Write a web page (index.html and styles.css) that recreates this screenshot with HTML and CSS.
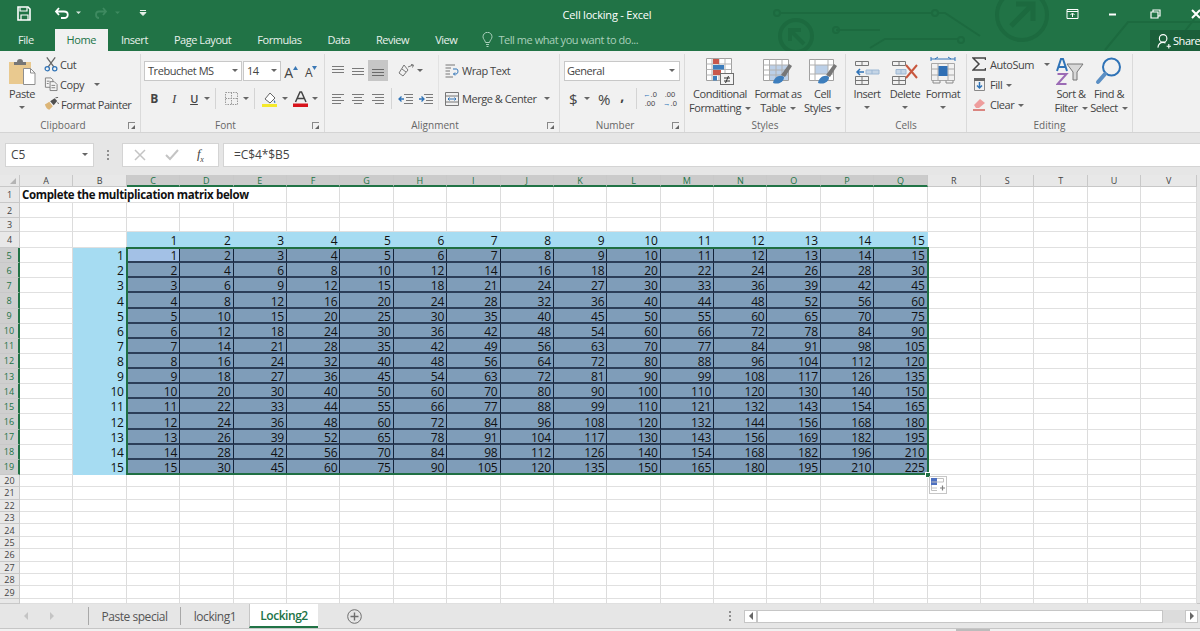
FILE: index.html
```html
<!DOCTYPE html>
<html lang="en">

<head>
    <meta charset="UTF-8">
    <title>Cell locking - Excel</title>

    <link rel="stylesheet" href="styles.css">
</head>

<body>
    <header class="head">
        <svg class="circuit" width="440" height="51" viewBox="760 0 440 51" fill="none" stroke="#1c6a3f" stroke-width="2">
            <circle cx="777" cy="13" r="3" />
            <path d="M780 13H932M938 13H945L980 36M836 30H880M870 48L885 39H958" />
            <circle cx="935" cy="13" r="3" />
            <circle cx="836" cy="30" r="3" />
            <circle cx="961" cy="40" r="3" />
            <circle cx="796" cy="36" r="16" stroke-width="4" />
            <path d="M804 44L791 31M790 41V30H801" stroke-width="4" />
            <circle cx="1022" cy="15" r="25" stroke-width="4" />
            <path d="M1011 26L1032 5M1016 4H1033V21" stroke-width="5" />
            <path d="M1105 50L1128 22H1200M1170 50L1200 12" />
        </svg>

        <div class="titlebar">
            <svg class="qat" width="160" height="28" viewBox="0 0 160 28" fill="none" stroke="#fff">
                <path d="M18 7H28L30 9V20H18Z" stroke-width="1.6" />
                <path d="M20 7.500V11H27V7.500M21 20V15H28V20" stroke-width="1.2" />
                <path d="M59 8L56 11.500L59 15M56.500 11.500H64C69 11.500 69 18 64 18H61" stroke-width="1.8" />
                <path d="M76 11.500H81L78.500 14Z" fill="#d8e6de" stroke="none" />
                <path d="M103 8L106 11.500L103 15M105.500 11.500H99C95 11.500 95 18 99 18" stroke="#3e8a60" stroke-width="1.800" />
                <path d="M115 11.500H120L117.500 14Z" fill="#3e8a60" stroke="none" />
                <path d="M140 10.500H146M140 12.500H146L143 15.500Z" stroke="#e6efe9" fill="#e6efe9" stroke-width="1" />
            </svg>
            <div class="doc-title">Cell locking - Excel</div>
            <svg class="win-btns" width="150" height="28" viewBox="1050 0 150 28" fill="none" stroke="#fff">
                <path d="M1067 9.500H1078V18.500H1067Z" stroke-width="1" />
                <path d="M1067 11.500H1078M1072.500 17V13.500M1070.500 15L1072.500 13L1074.500 15" stroke-width="1" />
                <path d="M1109 14.500H1116" stroke-width="2" />
                <path d="M1151 12H1158V18H1151ZM1153 12V10H1160V16H1158" stroke-width="1.200" />
                <path d="M1192 10L1200 18M1200 10L1192 18" stroke-width="2" />
            </svg>
        </div>

        <nav class="tabs">
            <span class="tab file-tab">File</span>
            <span class="tab tab-on">Home</span>
            <span class="tab">Insert</span>
            <span class="tab">Page Layout</span>
            <span class="tab">Formulas</span>
            <span class="tab">Data</span>
            <span class="tab">Review</span>
            <span class="tab">View</span>
            <span class="tell-me">
                <svg width="11" height="15" viewBox="0 0 11 15" fill="none" stroke="#a9d0bb">
                    <path d="M3.500 10.500C3 8 1 7 1 4.800A4.500 4.500 0 0 1 10 4.800C10 7 8 8 7.500 10.500ZM4 12.500H7M4.500 14.500H6.500" />
                </svg>
                Tell me what you want to do...
            </span>
            <span class="share">
                <svg width="14" height="16" viewBox="0 0 16 17" fill="none" stroke="#fff" stroke-width="1.300">
                    <circle cx="7" cy="5.500" r="4.300" />
                    <path d="M1 16C1.500 12 4 10 7 10C8 10 9 10.200 9.800 10.700M11 14.500H16M13.500 12V17" />
                </svg>
                Share
            </span>
        </nav>
    </header>

    <section class="ribbon">

        <div class="group g-clip">
            <div class="group-body">
                <div class="big paste-btn">
                    <svg width="28" height="31" viewBox="0 0 28 31">
                        <rect x="1" y="6" width="22" height="22" fill="#e9c98f" />
                        <path d="M6 9V6H9A3 3 0 0 1 15 6H18V9Z" fill="#767676" />
                        <path d="M15.500 12.500H22.500L27 17V28.500H15.500Z" fill="#fff" stroke="#8f8f8f" />
                        <path d="M22.500 12.500V17H27" fill="none" stroke="#8f8f8f" />
                    </svg>
                    <span>Paste</span>
                    <i class="caret"></i>
                </div>
                <div class="small-col">
                    <div class="small-row">
                        <svg width="14" height="16" viewBox="0 0 15 16" fill="none">
                            <path d="M3 1L10.500 11M12 1L4.500 11" stroke="#666" stroke-width="1.400" />
                            <circle cx="3.500" cy="13" r="2.300" stroke="#2f73b7" stroke-width="1.300" />
                            <circle cx="11.500" cy="13" r="2.300" stroke="#2f73b7" stroke-width="1.300" />
                        </svg>
                        Cut
                    </div>
                    <div class="small-row">
                        <svg width="14" height="16" viewBox="0 0 15 16" fill="#f4f4f4" stroke="#7d7d7d">
                            <path d="M1.500 1.500H7.500L9.500 3.500V11.500H1.500Z" />
                            <path d="M6.500 5.500H11L14 8.500V15H6.500Z" />
                            <path d="M3 5H6M3 7.500H5M8 9.500H12M8 12H12" fill="none" />
                        </svg>
                        Copy
                        <i class="caret copy-caret"></i>
                    </div>
                    <div class="small-row">
                        <svg width="15" height="14" viewBox="0 0 17 15">
                            <path d="M1 8L6 5L10 10L6 14C4 14 2 11 1 8Z" fill="#dcb577" />
                            <path d="M7 4.500L12 1L15 4L11 9Z" fill="#4f4f4f" />
                            <path d="M13 0.500L16 0M15 6L17 7" stroke="#4f4f4f" />
                        </svg>
                        Format Painter
                    </div>
                </div>
            </div>
            <div class="group-label"><span>Clipboard</span><i class="launcher"></i></div>
        </div>

        <div class="group g-font">
            <div class="group-body two-rows">
                <div class="tool-row">
                    <div class="combo font-name">Trebuchet MS<i class="caret"></i></div>
                    <div class="combo font-size">14<i class="caret"></i></div>
                    <span class="tb grow-a">A<svg width="5" height="4" viewBox="0 0 5 4"><path d="M0 4L2.500 0L5 4Z" fill="#3a78b5" /></svg></span>
                    <span class="tb shrink-a">A<svg width="5" height="4" viewBox="0 0 5 4"><path d="M0 0L2.500 4L5 0Z" fill="#3a78b5" /></svg></span>
                </div>
                <div class="tool-row font-tools">
                    <span class="tb tb-b">B</span>
                    <span class="tb tb-i">I</span>
                    <span class="tb tb-u">U</span>
                    <i class="caret"></i>
                    <span class="sep"></span>
                    <span class="tb">
                        <svg width="13" height="13" viewBox="0 0 13 13" fill="none" stroke="#9a9a9a" stroke-dasharray="1.500 1">
                            <path d="M.5 .5H12.500V12.500H.5ZM6.500 .5V12.500M.5 6.500H12.500" />
                        </svg>
                    </span>
                    <i class="caret"></i>
                    <span class="sep"></span>
                    <span class="tb">
                        <svg width="16" height="16" viewBox="0 0 16 16">
                            <path d="M3 8L8 2L13 7L8 12Z" fill="#fff" stroke="#666" />
                            <path d="M12 9C13 10 14 11 13 12C12 12 11.500 10 12 9Z" fill="#3f78b5" />
                            <rect y="13" width="15" height="3" fill="#f5e92b" />
                        </svg>
                    </span>
                    <i class="caret"></i>
                    <span class="tb tb-color">
                        <svg width="15" height="16" viewBox="0 0 15 16">
                            <path d="M2.500 11L7 1H8.500L13 11M4.500 7.500H11" fill="none" stroke="#444" stroke-width="1.500" />
                            <rect y="12.500" width="15" height="3.500" fill="#d8141c" />
                        </svg>
                    </span>
                    <i class="caret"></i>
                </div>
            </div>
            <div class="group-label"><span>Font</span><i class="launcher"></i></div>
        </div>

        <div class="group g-align">
            <div class="group-body two-rows align-body">
                <div class="align-left">
                    <div class="tool-row">
                        <span class="tb"><svg width="14" height="10" viewBox="0 0 14 10" stroke="#7a7a7a"><path d="M1 .5H13M1 3.500H13M1 6.500H13" /></svg></span>
                        <span class="tb"><svg width="14" height="10" viewBox="0 0 14 10" stroke="#7a7a7a"><path d="M1 2.500H13M1 5.500H13M1 8.500H13" /></svg></span>
                        <span class="tb tb-active"><svg width="14" height="10" viewBox="0 0 14 10" stroke="#6a6a6a"><path d="M1 3.500H13M1 6.500H13M1 9.500H13" /></svg></span>
                        <span class="tb tb-orient">
                            <svg width="16" height="13" viewBox="0 0 16 13" fill="none" stroke="#777">
                                <path d="M1 9L6 1L10 6L5 12ZM4 5L8 8M10 3L15 1M13 0.500L15.500 1L14.500 3.500" />
                            </svg>
                        </span>
                        <i class="caret"></i>
                    </div>
                    <div class="tool-row">
                        <span class="tb"><svg width="14" height="10" viewBox="0 0 14 10" stroke="#7a7a7a"><path d="M1 .5H13M1 3.500H10M1 6.500H13M1 9.500H10" /></svg></span>
                        <span class="tb"><svg width="14" height="10" viewBox="0 0 14 10" stroke="#7a7a7a"><path d="M1 .5H13M3 3.500H11M1 6.500H13M3 9.500H11" /></svg></span>
                        <span class="tb"><svg width="14" height="10" viewBox="0 0 14 10" stroke="#7a7a7a"><path d="M1 .5H13M4 3.500H13M1 6.500H13M4 9.500H13" /></svg></span>
                        <span class="sep sep-narrow"></span>
                        <span class="tb"><svg width="15" height="10" viewBox="0 0 15 10" fill="none"><path d="M6 .5H15M8 3.500H15M8 6.500H15M6 9.500H15" stroke="#7a7a7a" /><path d="M6 5H1M3.500 2.500L1 5L3.500 7.500" stroke="#2f73b7" stroke-width="1.300" /></svg></span>
                        <span class="tb"><svg width="15" height="10" viewBox="0 0 15 10" fill="none"><path d="M6 .5H15M8 3.500H15M8 6.500H15M6 9.500H15" stroke="#7a7a7a" /><path d="M1 5H6M3.500 2.500L6 5L3.500 7.500" stroke="#2f73b7" stroke-width="1.300" /></svg></span>
                    </div>
                </div>
                <div class="align-right">
                    <div class="small-row">
                        <svg width="14" height="14" viewBox="0 0 14 14" fill="none" stroke="#777">
                            <path d="M.5 1H10M.5 4H6M.5 7H5M.5 10H5M.5 13H8" />
                            <path d="M8 5H11.500C13.500 5 13.500 10 11 10H8.500M10 8.500L8.500 10L10 11.500" stroke="#2f73b7" />
                        </svg>
                        Wrap Text
                    </div>
                    <div class="small-row">
                        <svg width="14" height="14" viewBox="0 0 14 14" fill="none" stroke="#777">
                            <path d="M.5 .5H13.500V13.500H.5ZM.5 4H13.500M.5 10H13.500" />
                            <path d="M3 7H11M4.500 5.500L3 7L4.500 8.500M9.500 5.500L11 7L9.500 8.500" stroke="#2f73b7" />
                        </svg>
                        Merge &amp; Center
                        <i class="caret merge-caret"></i>
                    </div>
                </div>
            </div>
            <div class="group-label"><span>Alignment</span><i class="launcher"></i></div>
        </div>

        <div class="group g-number">
            <div class="group-body two-rows">
                <div class="tool-row">
                    <div class="combo num-format">General<i class="caret"></i></div>
                </div>
                <div class="tool-row num-tools">
                    <span class="tb tb-cur">$</span>
                    <i class="caret"></i>
                    <span class="tb tb-pct">%</span>
                    <span class="tb tb-comma">,</span>
                    <span class="sep"></span>
                    <span class="tb dec"><b><em>←</em>.0</b><b>.00</b></span>
                    <span class="tb dec"><b>.00</b><b><em>→</em>.0</b></span>
                </div>
            </div>
            <div class="group-label"><span>Number</span><i class="launcher"></i></div>
        </div>

        <div class="group g-styles">
            <div class="group-body">
                <div class="big w-cond">
                    <svg width="28" height="31" viewBox="0 0 28 31">
                        <path d="M.5 2.500H25.500V24.500H.5Z" fill="#fff" stroke="#a0a0a0" />
                        <path d="M6 2.500V24.500M13 2.500V24.500M19 2.500V24.500M.5 8H25.500M.5 13.500H25.500M.5 19H25.500" stroke="#b5b5b5" />
                        <rect x="7" y="3" width="6" height="5" fill="#c8584c" />
                        <rect x="7" y="9" width="11" height="4.500" fill="#3d7ebd" />
                        <rect x="7" y="14" width="8" height="5" fill="#c8584c" />
                        <rect x="7" y="20" width="4" height="4.500" fill="#3d7ebd" />
                        <rect x="14.500" y="17.500" width="13" height="11" fill="#f4f4f4" stroke="#6e6e6e" />
                        <path d="M18 22H24M18 25H24M22.500 20L19.500 27" stroke="#333" fill="none" />
                    </svg>
                    <span>Conditional</span>
                    <span>Formatting<i class="caret inline"></i></span>
                </div>
                <div class="big w-table">
                    <svg width="30" height="31" viewBox="0 0 30 31">
                        <path d="M.5 3.500H25.500V24.500H.5Z" fill="#fff" stroke="#a0a0a0" />
                        <rect x="7" y="9" width="18" height="15" fill="#bcd0e8" />
                        <path d="M6.500 3.500V24.500M13 3.500V24.500M19 3.500V24.500M.5 9H25.500M.5 14H25.500M.5 19H25.500" stroke="#b0b0b0" />
                        <path d="M18 19L26 8L29 10L22 21Z" fill="#777" />
                        <path d="M10 27C11 21 17 18 21 21C21 25 17 29 10 27Z" fill="#3d7ebd" />
                    </svg>
                    <span>Format as</span>
                    <span>Table<i class="caret inline"></i></span>
                </div>
                <div class="big w-cell">
                    <svg width="28" height="31" viewBox="0 0 28 31">
                        <path d="M.5 3.500H24.500V24.500H.5Z" fill="#fff" stroke="#a0a0a0" />
                        <rect x="6" y="9" width="13" height="9" fill="#bcd0e8" />
                        <path d="M6 3.500V24.500M19 3.500V24.500M.5 9H24.500M.5 18H24.500" stroke="#b0b0b0" />
                        <path d="M17 19L25 8L28 10L21 21Z" fill="#777" />
                        <path d="M9 27C10 21 16 18 20 21C20 25 16 29 9 27Z" fill="#3d7ebd" />
                    </svg>
                    <span>Cell</span>
                    <span>Styles<i class="caret inline"></i></span>
                </div>
            </div>
            <div class="group-label"><span>Styles</span></div>
        </div>

        <div class="group g-cells">
            <div class="group-body">
                <div class="big w-cellbtn">
                    <svg width="26" height="31" viewBox="0 0 26 31" fill="none">
                        <path d="M1.500 5.500H14.500V9.500H1.500ZM8 5.500V9.500M1.500 20.500H14.500V28.500H1.500ZM8 20.500V28.500M1.500 24.500H14.500" stroke="#777" />
                        <path d="M12 14H25V18H12ZM18 14V18" stroke="#9db8d4" fill="#c5d5e6" />
                        <path d="M10 16H3M6 13L3 16L6 19" stroke="#2f73b7" stroke-width="1.500" />
                    </svg>
                    <span>Insert</span>
                    <i class="caret"></i>
                </div>
                <div class="big w-cellbtn">
                    <svg width="28" height="31" viewBox="0 0 28 31" fill="none">
                        <path d="M1.500 5.500H14.500V9.500H1.500ZM8 5.500V9.500M1.500 20.500H14.500V28.500H1.500ZM8 20.500V28.500M1.500 24.500H14.500" stroke="#777" />
                        <path d="M5 13.500H15V18H5ZM10 13.500V18" stroke="#9db8d4" fill="#c5d5e6" />
                        <path d="M15 9L26 22M26 9L15 22" stroke="#c8573e" stroke-width="2" />
                    </svg>
                    <span>Delete</span>
                    <i class="caret"></i>
                </div>
                <div class="big w-cellbtn">
                    <svg width="26" height="31" viewBox="0 0 26 31" fill="none">
                        <path d="M1 3H25M1 1V5M25 1V5M5 3L8 1M21 3L18 1" stroke="#2f73b7" />
                        <path d="M1.500 7.500H24.500V24.500H1.500ZM1.500 13H24.500M1.500 19H24.500M8 7.500V24.500M18 7.500V24.500" stroke="#a8a8a8" />
                        <rect x="8.500" y="10" width="9" height="10" fill="#2f6fb5" />
                        <path d="M3 24.500V27H10V24.500M16 24.500V27H23V24.500" stroke="#8a8a8a" />
                    </svg>
                    <span>Format</span>
                    <i class="caret"></i>
                </div>
            </div>
            <div class="group-label"><span>Cells</span></div>
        </div>

        <div class="group g-edit">
            <div class="group-body">
                <div class="small-col edit-col">
                    <div class="small-row">
                        <svg width="14" height="14" viewBox="0 0 14 14" fill="none" stroke="#444" stroke-width="1.500">
                            <path d="M13.500 3V1H1L7 7L1 13H13.500V11" />
                        </svg>
                        AutoSum
                        <i class="caret sum-caret"></i>
                    </div>
                    <div class="small-row">
                        <svg width="14" height="14" viewBox="0 0 14 14" fill="none">
                            <path d="M2.500 1.500H12.500V13.500H2.500Z" stroke="#888" />
                            <rect x="2" y="1" width="11" height="3" fill="#666" />
                            <path d="M7.500 5V11M5 8.500L7.500 11L10 8.500" stroke="#2f73b7" stroke-width="1.500" />
                        </svg>
                        <span>Fill<i class="caret inline"></i></span>
                    </div>
                    <div class="small-row">
                        <svg width="14" height="14" viewBox="0 0 14 14">
                            <path d="M2 8L8 2L13 6L7 11H4Z" fill="#ee9d9d" />
                            <path d="M1 13H13" stroke="#d0574f" stroke-width="1.400" />
                        </svg>
                        <span>Clear<i class="caret inline"></i></span>
                    </div>
                </div>
                <div class="big w-sort">
                    <svg width="30" height="31" viewBox="0 0 30 31" fill="none">
                        <path d="M1 15L5 3H7L11 15M3 11H9" stroke="#2f73b7" stroke-width="2" />
                        <path d="M1.500 18H10.500L1.500 28H10.500" stroke="#9b6bb5" stroke-width="2" />
                        <path d="M11 8H27L21 16V24H17V16Z" fill="#d8d8d8" stroke="#777" />
                    </svg>
                    <span>Sort &amp;</span>
                    <span>Filter<i class="caret inline"></i></span>
                </div>
                <div class="big w-find">
                    <svg width="28" height="31" viewBox="0 0 28 31" fill="none">
                        <circle cx="16.500" cy="11" r="8.500" stroke="#2f73b7" stroke-width="2" />
                        <path d="M10 18L3 26" stroke="#5b8fc4" stroke-width="4" stroke-linecap="round" />
                    </svg>
                    <span>Find &amp;</span>
                    <span>Select<i class="caret inline"></i></span>
                </div>
            </div>
            <div class="group-label"><span>Editing</span></div>
        </div>
    </section>

    <section class="formula-bar">
        <div class="name-box">C5<i class="caret"></i></div>
        <span class="grip"></span>
        <div class="fx-btns">
            <svg width="12" height="12" viewBox="0 0 12 12" stroke="#c4c4c4" stroke-width="1.500"><path d="M1 1L11 11M11 1L1 11" /></svg>
            <svg width="14" height="12" viewBox="0 0 14 12" fill="none" stroke="#c4c4c4" stroke-width="2"><path d="M1 6L5 10L13 1" /></svg>
            <span class="fx">f<sub>x</sub></span>
        </div>
        <div class="formula-input">=C$4*$B5</div>
    </section>

    <section class="sheet">
        <div class="sheet-grid"></div>
        <div class="selection"></div>
        <div class="sel-handle"></div>
        <div class="paste-opt">
            <svg width="14" height="14" viewBox="0 0 14 14">
                <rect x="0" y="0" width="6" height="7" fill="#4c6fc0" />
                <path d="M6 .5H12.500V4H.5M.5 7V12.500H6M.5 10H6" fill="none" stroke="#c0c0c0" />
                <path d="M9 10H14M11.500 7.500V12.500" stroke="#808080" stroke-width="1.200" />
            </svg>
        </div>
    </section>

    <footer class="sheet-tabs">
        <div class="nav-arrows">
            <svg width="30" height="8" viewBox="0 0 30 8" fill="#c4c4c4"><path d="M4 0V8L0 4ZM26 0L30 4L26 8Z" /></svg>
        </div>
        <span class="s-tab s-first">Paste special</span>
        <span class="s-tab s-second">locking1</span>
        <span class="s-tab s-on">Locking2</span>
        <svg class="add-sheet" width="15" height="15" viewBox="0 0 15 15" fill="none" stroke="#6e6e6e"><circle cx="7.500" cy="7.500" r="6.800" /><path d="M7.500 3.500V11.500M3.500 7.500H11.500" stroke-width="1.400" /></svg>
        <span class="grip bottom-grip"></span>
        <div class="scroll-h">
            <span class="s-arrow"><i class="tri-l"></i></span>
            <span class="s-track"></span>
            <span class="s-rest"></span>
            <span class="s-arrow"><i class="tri-r"></i></span>
        </div>
    </footer>
    <div class="status-strip"><span class="strip-mark"></span></div>

    <script src="script.js"></script>
</body></html>
```

FILE: styles.css
```css
* {
    box-sizing: border-box;
}

html,
body {
    margin: 0;
    height: 631px;
    overflow: hidden;
}

body {
    width: 1200px;
    font-family: "Open Sans", sans-serif;
    font-size: 11px;
    letter-spacing: -0.45px;
    color: #444;
    background: #e6e6e6;
}

i,
em {
    font-style: normal;
}

/* title + tabs */

.head {
    position: relative;
    height: 51px;
    background: #217346;
    color: #e8f1ec;
    overflow: hidden;
}

.circuit {
    position: absolute;
    right: 0;
    top: 0;
}

.titlebar {
    position: relative;
    display: grid;
    grid-template-columns: 1fr auto 1fr;
    height: 28px;
}

.doc-title {
    margin-left: 14px;
    line-height: 30px;
    color: #fff;
    letter-spacing: -0.2px;
}

.win-btns {
    justify-self: end;
}

.tabs {
    position: relative;
    display: flex;
    height: 23px;
    padding-left: 5px;
    line-height: 24px;
}

.tab {
    padding: 0 13px;
}

.file-tab {
    padding-right: 21px;
}

.tab-on {
    padding: 0 12px;
    background: #f1f1f1;
    color: #217346;
    margin-top: 1px;
    line-height: 22px;
}

.tell-me {
    display: flex;
    align-items: center;
    gap: 5px;
    margin-left: 12px;
    color: #a9d0bb;
}

.share {
    display: flex;
    align-items: center;
    gap: 2px;
    margin-left: auto;
    width: 50px;
    padding-left: 7px;
    margin-top: 2px;
    background: #1b5f3a;
    color: #fff;
    white-space: nowrap;
}

.share svg {
    flex: none;
}

/* ribbon */

.ribbon {
    display: flex;
    height: 82px;
    padding-top: 3px;
    background: #f1f1f1;
    border-bottom: 1px solid #d4d4d4;
}

.group {
    display: flex;
    flex-direction: column;
    height: 78px;
    border-right: 1px solid #dadada;
}

.g-clip { width: 141px; }
.g-font { width: 184px; }
.g-align { width: 235px; }
.g-number { width: 125px; }
.g-styles { width: 161px; padding-left: 4px; }
.g-cells { width: 121px; padding-left: 2px; }
.g-edit { width: 166px; padding-left: 5px; }

.group-body {
    display: flex;
    flex: none;
    height: 64px;
}

.two-rows {
    flex-direction: column;
    gap: 7px;
    padding: 6px 0 0 3px;
}

.group-label {
    display: flex;
    align-items: center;
    height: 14px;
    font-size: 10px;
    letter-spacing: 0;
    color: #666;
}

.g-styles .group-label { margin-left: -4px; }
.g-cells .group-label { margin-left: -2px; }
.g-edit .group-label { margin-left: -5px; }

.group-label span {
    flex: 1;
    text-align: center;
}

.launcher {
    position: relative;
    width: 7px;
    height: 7px;
    margin: 0 5px 0 2px;
    border-left: 1px solid #888;
    border-top: 1px solid #888;
}

.launcher::after {
    content: "";
    position: absolute;
    right: 0;
    bottom: 0;
    border: 2px solid transparent;
    border-right-color: #666;
    border-bottom-color: #666;
}

.caret {
    display: inline-block;
    flex: none;
    width: 0;
    height: 0;
    border: 3px solid transparent;
    border-top: 3px solid #666;
    border-bottom: 0;
}

.caret.inline {
    margin-left: 4px;
    vertical-align: 2px;
}

.big {
    display: flex;
    flex-direction: column;
    align-items: center;
    line-height: 14px;
    white-space: nowrap;
    padding-top: 2px;
}

.big svg {
    flex: none;
}

.big > .caret {
    margin-top: 5px;
}

.paste-btn { width: 44px; }
.w-cond { width: 62px; }
.w-table { width: 54px; }
.w-cell { width: 35px; }
.w-cellbtn { width: 38px; }
.w-sort { width: 38px; }
.w-find { width: 38px; }

.small-col {
    display: flex;
    flex-direction: column;
}

.small-row {
    display: flex;
    align-items: center;
    gap: 3px;
    height: 20px;
    white-space: nowrap;
}

.small-row svg {
    flex: none;
}

.g-clip .small-row {
    gap: 2px;
}

.copy-caret { margin-left: 8px; }
.merge-caret { margin-left: 4px; }
.sum-caret { margin-left: 6px; }
.edit-col { width: 80px; }
.edit-col .small-row { gap: 4px; }

.tool-row {
    display: flex;
    align-items: center;
    height: 21px;
}

.tb {
    display: flex;
    align-items: center;
    justify-content: center;
    width: 20px;
    height: 21px;
    flex: none;
}

.tb-active {
    background: #c6c6c6;
}

.sep {
    flex: none;
    width: 1px;
    height: 21px;
    margin: 0 5px;
    background: #d4d4d4;
}

.combo {
    display: flex;
    align-items: center;
    justify-content: space-between;
    height: 20px;
    padding: 0 3px;
    background: #fff;
    border: 1px solid #c8c8c8;
    white-space: nowrap;
}

.font-name { width: 98px; margin-right: 1px; }
.font-size { width: 38px; }
.num-format { width: 116px; margin-left: 1px; padding-left: 2px; padding-right: 4px; }

.grow-a,
.shrink-a {
    align-items: flex-end;
    line-height: 17px;
}

.grow-a { font-size: 14px; }
.shrink-a { font-size: 12px; }

.grow-a svg,
.shrink-a svg {
    margin-bottom: 11px;
}

.tb-b { font-weight: 700; font-size: 12px; color: #444; }
.tb-i { font-style: italic; font-family: "Liberation Serif", serif; font-size: 13px; }
.tb-u { text-decoration: underline; font-weight: 600; }

.font-tools .sep { margin: 0 3px 0 5px; }
.font-tools .tb:nth-of-type(n+4) { width: 24px; }

.align-body {
    flex-direction: row;
    gap: 0;
}

.align-left {
    display: flex;
    flex-direction: column;
    gap: 7px;
    width: 110px;
}

.sep-narrow {
    margin: 0 3px;
}

.tb-orient {
    margin-left: 7px;
    width: 22px;
}

.align-right {
    display: flex;
    flex-direction: column;
    gap: 7px;
    height: 55px;
    margin-top: -5px;
    padding: 5px 0 0 6px;
    border-left: 1px solid #e2e2e2;
}

.align-right .small-row {
    height: 21px;
}

.num-tools {
    padding-left: 1px;
}

.tb-cur,
.tb-pct {
    font-size: 15px;
}

.tb-cur { width: 16px; margin-left: 1px; margin-right: 3px; }
.tb-pct { width: 22px; margin-left: 3px; }
.tb-comma { width: 14px; font-size: 14px; font-weight: 700; align-items: flex-start; line-height: 16px; }
.num-tools .sep { margin: 0 3px 0 7px; }

.dec {
    flex-direction: column;
    font-family: "Liberation Sans", sans-serif;
    font-size: 7.500px;
    line-height: 9px;
    letter-spacing: 0;
}

.dec b {
    font-weight: 400;
}

.dec em {
    color: #2f73b7;
}

/* formula bar */

.formula-bar {
    display: flex;
    align-items: center;
    height: 42px;
    padding: 1px 0 0 5px;
    background: #e6e6e6;
}

.name-box {
    display: flex;
    align-items: center;
    justify-content: space-between;
    width: 89px;
    height: 24px;
    padding: 0 5px;
    background: #fff;
    border: 1px solid #d4d4d4;
    font-size: 12px;
    letter-spacing: 0;
}

.grip {
    flex: none;
    width: 2px;
    height: 10px;
    margin: 0 13px;
    background: repeating-linear-gradient(#8f8f8f 0 2px, transparent 2px 4px);
}

.fx-btns {
    display: flex;
    align-items: center;
    width: 97px;
    height: 24px;
    padding-left: 11px;
    gap: 19px;
    background: #fff;
    border: 1px solid #d4d4d4;
}

.fx {
    font-family: "Liberation Serif", serif;
    font-style: italic;
    font-size: 13px;
    margin-left: -1px;
}

.fx sub {
    font-size: 8px;
}

.formula-input {
    flex: 1;
    height: 24px;
    margin-left: 4px;
    padding-left: 10px;
    font-size: 12px;
    letter-spacing: -0.1px;
    line-height: 22px;
    background: #fff;
    border: 1px solid #d4d4d4;
    border-right: 0;
}

/* sheet */

.sheet {
    position: relative;
    height: 429px;
    padding-right: 3px;
    background: #e6e6e6;
    border-bottom: 1px solid #c6c6c6;
}

.sheet-grid {
    display: grid;
    grid-template-columns: 20px repeat(21, 53.4px) 1fr;
    grid-template-rows: 12px 16px 15px 14px 16px repeat(15, 15.133px) repeat(10, 12.4px) 5px;
    background: #fff;
    font-size: 12px;
    letter-spacing: -0.2px;
    line-height: 1;
    color: #111;
}

.sheet-grid > div {
    display: flex;
    align-items: flex-end;
    justify-content: flex-end;
    white-space: nowrap;
    border-right: 1px solid #dcdcdc;
    border-bottom: 1px solid #e0e0e0;
}

.sheet-grid > .corner,
.sheet-grid > .col-head,
.sheet-grid > .row-head {
    align-items: center;
    justify-content: center;
    background: #e8e8e8;
    font-size: 9px;
    letter-spacing: 0;
    color: #444;
    border-right: 1px solid #c8c8c8;
    border-bottom: 1px solid #c8c8c8;
}

.sheet-grid > .corner {
    position: relative;
}

.corner::after {
    content: "";
    position: absolute;
    right: 3px;
    bottom: 2px;
    border: 3px solid transparent;
    border-right-color: #b4b4b4;
    border-bottom-color: #b4b4b4;
}

.sheet-grid > .col-head.on {
    background: #cbcbcb;
    color: #217346;
    border-bottom: 2px solid #217346;
}

.sheet-grid > .row-head.on {
    background: #cfcfcf;
    color: #217346;
    border-right: 2px solid #217346;
}

.sheet-grid > .title-cell {
    grid-column: span 5;
    justify-content: flex-start;
    padding-left: 2px;
    font-weight: 700;
    font-size: 11.500px;
    letter-spacing: -0.35px;
    color: #111;
    align-items: center;
}

.sheet-grid > .hd {
    background: #a6dcf2;
    border-color: #a6dcf2;
    padding-right: 2px;
}

.sheet-grid > .val {
    background: #7f9db9;
    border-right: 1px solid #14233a;
    border-bottom: 2px solid #2c3e58;
    padding-right: 2px;
    line-height: 10px;
}

.sheet-grid > .active {
    background: #a3c1e6;
}

.selection {
    position: absolute;
    left: 126px;
    top: 72px;
    width: 803px;
    height: 228px;
    border: 2px solid #1f6f43;
    pointer-events: none;
}

.sel-handle {
    position: absolute;
    left: 925px;
    top: 297px;
    width: 6px;
    height: 6px;
    background: #1f6f43;
    border: 1px solid #fff;
}

.paste-opt {
    position: absolute;
    left: 929px;
    top: 301px;
    display: flex;
    align-items: center;
    justify-content: center;
    width: 18px;
    height: 18px;
    background: #fff;
    border: 1px solid #c6c6c6;
}

/* sheet tabs */

.sheet-tabs {
    display: flex;
    align-items: center;
    height: 24px;
    background: #e6e6e6;
}

.nav-arrows {
    display: flex;
    align-items: center;
    width: 89px;
    height: 18px;
    padding-left: 24px;
    border-right: 1px solid #a8a8a8;
}

.s-tab {
    display: flex;
    flex: none;
    align-items: center;
    justify-content: center;
    height: 18px;
    font-size: 12px;
    white-space: nowrap;
    border-right: 1px solid #a8a8a8;
    color: #555;
}

.s-first { width: 92px; }
.s-second { width: 68px; border-right: 0; }

.sheet-tabs .s-on {
    width: 69px;
    height: 24px;
    background: #fff;
    color: #217346;
    font-weight: 600;
    border-right: 0;
    border-left: 1px solid #c6c6c6;
    border-bottom: 2px solid #217346;
}

.add-sheet {
    margin-left: 29px;
    flex: none;
}

.bottom-grip {
    margin: 0 0 0 367px;
}

.scroll-h {
    display: flex;
    align-items: center;
    height: 13px;
    margin-left: 13px;
    flex: 1;
}

.s-arrow {
    display: flex;
    align-items: center;
    justify-content: center;
    width: 13px;
    height: 13px;
    background: #fff;
    border: 1px solid #c6c6c6;
    flex: none;
}

.tri-l,
.tri-r {
    width: 0;
    height: 0;
    border: 4px solid transparent;
}

.tri-l {
    border-right-color: #666;
    border-left: 0;
}

.tri-r {
    border-left-color: #666;
    border-right: 0;
}

.s-track {
    width: 406px;
    height: 13px;
    background: #fff;
    border: 1px solid #c6c6c6;
}

.s-rest {
    width: 22px;
    height: 13px;
    background: #dcdcdc;
}

.status-strip {
    display: flex;
    height: 3px;
    background: #f1f1f1;
    border-top: 1px solid #c6c6c6;
}

.strip-mark {
    width: 34px;
    margin-left: 956px;
    background: #bcbcbc;
}
```

FILE: script.js
```js
const grid = document.querySelector(".sheet-grid");
const letters = "ABCDEFGHIJKLMNOPQRSTUV".split("");

function addCell(className, text) {
    const cell = document.createElement("div");
    cell.className = className;
    if (text !== undefined) cell.textContent = text;
    grid.appendChild(cell);
    return cell;
}

// column headers
addCell("corner");
letters.forEach((letter, i) => {
    addCell(i >= 2 && i <= 16 ? "col-head on" : "col-head", letter);
});

// rows 1 - 30
for (let row = 1; row <= 30; row++) {
    const selected = row >= 5 && row <= 19;
    addCell(selected ? "row-head on" : "row-head", row < 30 ? row : "");

    if (row == 1) {
        addCell("title-cell", "Complete the multiplication matrix below");
        for (let c = 5; c < letters.length; c++) addCell("cell");
        continue;
    }

    letters.forEach((letter, c) => {
        if (row == 4 && c >= 2 && c <= 16) {
            addCell("hd", c - 1);
        } else if (selected && c == 1) {
            addCell("hd", row - 4);
        } else if (selected && c >= 2 && c <= 16) {
            const active = row == 5 && c == 2 ? " active" : "";
            addCell("val" + active, (row - 4) * (c - 1));
        } else {
            addCell("cell");
        }
    });
}
```
